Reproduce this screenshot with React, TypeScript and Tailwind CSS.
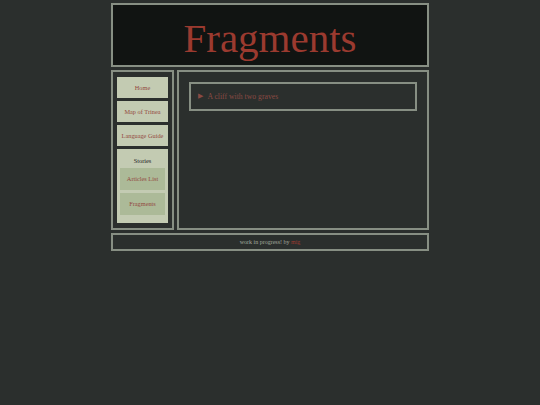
const serif = { fontFamily: '"Liberation Serif", "DejaVu Serif", serif' };

function NavItem({ label }: { label: string }) {
  return (
    <div className="flex h-[21px] items-center justify-center bg-[#c3cbb2] text-[6.3px] text-[#93493e]">
      {label}
    </div>
  );
}

function SubItem({ label }: { label: string }) {
  return (
    <div className="flex h-[22px] items-center justify-center bg-[#acba98] text-[6.3px] text-[#93493e]">
      {label}
    </div>
  );
}

export default function App() {
  return (
    <div className="min-h-[405px] bg-[#2b2f2d] pt-[3px]" style={serif}>
      <div className="mx-auto flex w-[318px] flex-col gap-[3px]">
        {/* Header */}
        <div className="flex h-[64px] items-center justify-center border-2 border-[#878f83] bg-[#111412]">
          <h1 className="pt-[6px] text-[41px] leading-none text-[#9b3a2f]">Fragments</h1>
        </div>

        {/* Body */}
        <div className="flex h-[160px] gap-[3px]">
          {/* Sidebar */}
          <div className="flex w-[63px] flex-col gap-[3px] border-2 border-[#878f83] px-[4px] pt-[5px] pb-[5px]">
            <NavItem label="Home" />
            <NavItem label="Map of Trinea" />
            <NavItem label="Language Guide" />
            <div className="flex flex-1 flex-col gap-[3px] bg-[#c3cbb2] px-[3px] pb-[6px]">
              <div className="flex h-[16px] items-end justify-center text-[6.3px] text-[#1d211f]">Stories</div>
              <SubItem label="Articles List" />
              <SubItem label="Fragments" />
            </div>
          </div>

          {/* Main */}
          <div className="flex-1 border-2 border-[#878f83] p-[10px]">
            <div className="flex h-[29px] items-center gap-[4px] border-2 border-[#878f83] pl-[7px] text-[7.7px] text-[#8a4a43]">
              <span className="text-[7px]">▶</span>
              <span>A cliff with two graves</span>
            </div>
          </div>
        </div>

        {/* Footer */}
        <div className="flex h-[18px] items-center justify-center border-2 border-[#878f83] text-[6px] text-[#a3aa9f]">
          <span>
            work in progress! by <span className="text-[#9b3a2f]">mig</span>
          </span>
        </div>
      </div>
    </div>
  );
}
